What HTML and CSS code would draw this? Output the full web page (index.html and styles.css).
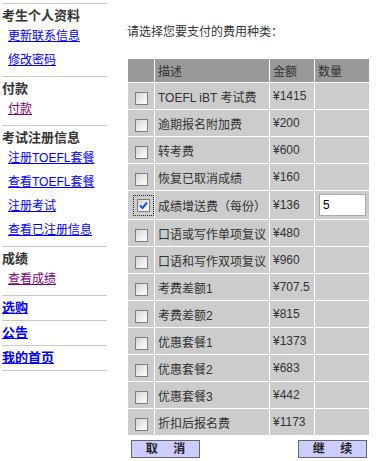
FILE: index.html
```html
<!DOCTYPE html>
<html lang="zh-CN">
<head>
<meta charset="utf-8">
<title>付款</title>
<link rel="stylesheet" href="styles.css">
</head>
<body>
<div class="page">
  <nav class="side">
    <div class="sec">
      <div class="sec-title">考生个人资料</div>
      <a class="link" href="#">更新联系信息</a>
      <a class="link" href="#">修改密码</a>
    </div>
    <div class="sec">
      <div class="sec-title">付款</div>
      <a class="link visited" href="#">付款</a>
    </div>
    <div class="sec">
      <div class="sec-title">考试注册信息</div>
      <a class="link" href="#">注册TOEFL套餐</a>
      <a class="link" href="#">查看TOEFL套餐</a>
      <a class="link" href="#">注册考试</a>
      <a class="link" href="#">查看已注册信息</a>
    </div>
    <div class="sec">
      <div class="sec-title">成绩</div>
      <a class="link visited" href="#">查看成绩</a>
    </div>
    <div class="sec sec-link"><a class="big-link" href="#">选购</a></div>
    <div class="sec sec-link"><a class="big-link" href="#">公告</a></div>
    <div class="sec sec-link"><a class="big-link" href="#">我的首页</a></div>
    <div class="sec sec-end"></div>
  </nav>
  <main class="main">
    <p class="prompt">请选择您要支付的费用种类：</p>
    <table class="fees">
      <colgroup>
        <col class="c1"><col class="c2"><col class="c3"><col class="c4">
      </colgroup>
      <tr class="head"><th></th><th>描述</th><th>金额</th><th>数量</th></tr>
      <tr><td class="cb"><span class="box"></span></td><td>TOEFL iBT 考试费</td><td>¥1415</td><td></td></tr>
      <tr><td class="cb"><span class="box"></span></td><td>逾期报名附加费</td><td>¥200</td><td></td></tr>
      <tr><td class="cb"><span class="box"></span></td><td>转考费</td><td>¥600</td><td></td></tr>
      <tr><td class="cb"><span class="box"></span></td><td>恢复已取消成绩</td><td>¥160</td><td></td></tr>
      <tr class="tall"><td class="cb"><span class="box checked"><svg width="11" height="11" viewBox="0 0 11 11"><path d="M2 5.5 L4.5 8 L9 2.5" stroke="#2150d8" stroke-width="2" fill="none"/></svg></span></td><td>成绩增送费（每份）</td><td>¥136</td><td class="qty"><span class="input">5</span></td></tr>
      <tr><td class="cb"><span class="box"></span></td><td>口语或写作单项复议</td><td>¥480</td><td></td></tr>
      <tr><td class="cb"><span class="box"></span></td><td>口语和写作双项复议</td><td>¥960</td><td></td></tr>
      <tr><td class="cb"><span class="box"></span></td><td>考费差额1</td><td>¥707.5</td><td></td></tr>
      <tr><td class="cb"><span class="box"></span></td><td>考费差额2</td><td>¥815</td><td></td></tr>
      <tr><td class="cb"><span class="box"></span></td><td>优惠套餐1</td><td>¥1373</td><td></td></tr>
      <tr><td class="cb"><span class="box"></span></td><td>优惠套餐2</td><td>¥683</td><td></td></tr>
      <tr><td class="cb"><span class="box"></span></td><td>优惠套餐3</td><td>¥442</td><td></td></tr>
      <tr><td class="cb"><span class="box"></span></td><td>折扣后报名费</td><td>¥1173</td><td></td></tr>
    </table>
    <div class="actions">
      <button class="btn" type="button">取 消</button>
      <button class="btn" type="button">继 续</button>
    </div>
  </main>
</div>
</body>
</html>
```
FILE: styles.css
```css
html, body {
  margin: 0;
  padding: 0;
  background: #fff;
}
body {
  font-family: "Liberation Sans", "Noto Sans CJK SC", sans-serif;
  font-size: 12px;
  color: #333;
}
.page {
  display: flex;
  align-items: flex-start;
}
.side {
  width: 105px;
  margin-left: 2px;
  padding-top: 3px;
  display: flex;
  flex-direction: column;
}
.sec {
  border-top: 1px solid #c8c8c8;
  padding: 3px 0 4px;
  display: flex;
  flex-direction: column;
}
.sec-title {
  font-size: 13px;
  font-weight: bold;
  line-height: 17px;
  height: 17px;
  color: #333;
}
.link {
  font-size: 12px;
  line-height: 24px;
  height: 24px;
  color: #0000ff;
  text-decoration: underline;
  margin-left: 6px;
  align-self: flex-start;
}
.link.visited {
  color: #800080;
}
.sec-link {
  padding: 0;
}
.big-link {
  font-size: 13px;
  font-weight: bold;
  line-height: 24px;
  height: 24px;
  color: #0000ff;
  text-decoration: underline;
  align-self: flex-start;
}
.sec-end {
  padding: 0;
}
.main {
  margin-left: 20px;
  width: 243px;
}
.prompt {
  margin: 24px 0 18px;
  line-height: 16px;
  font-size: 12px;
  color: #333;
}
.fees {
  border-collapse: separate;
  border-spacing: 1px;
  table-layout: fixed;
  width: 243px;
  background: #fff;
}
.c1 { width: 26px; }
.c2 { width: 114px; }
.c3 { width: 44px; }
.c4 { width: 54px; }
.fees th,
.fees td {
  padding: 0 0 0 3px;
  text-align: left;
  font-weight: normal;
  white-space: nowrap;
  overflow: hidden;
  color: #333;
}
.fees th {
  background: #999;
  height: 23px;
  font-size: 12px;
}
.fees td {
  background: #ccc;
  height: 26px;
  vertical-align: middle;
}
.fees tr.tall td {
  height: 28px;
}
.fees td.cb {
  padding: 0;
  vertical-align: top;
}
.box {
  display: block;
  box-sizing: border-box;
  width: 13px;
  height: 13px;
  margin: 9px 0 0 7px;
  border: 1px solid #7d7d7d;
  background: linear-gradient(135deg, #d4d4d4 0%, #f4f4f4 70%, #fff 100%);
}
.box.checked {
  margin-top: 8px;
  margin-left: 9px;
  outline: 1px dotted #222;
  outline-offset: 3px;
}
.box svg {
  display: block;
}
.fees td.qty {
  padding-left: 4px;
}
.input {
  display: block;
  box-sizing: border-box;
  width: 47px;
  height: 22px;
  border: 1px solid #a9a9a9;
  background: #fff;
  color: #000;
  padding: 3px 0 0 3px;
  line-height: 15px;
  font-size: 12px;
}
.actions {
  display: flex;
  justify-content: space-between;
  padding: 0 3px 0 4px;
  margin-top: 4px;
}
.btn {
  box-sizing: border-box;
  width: 69px;
  height: 18px;
  margin: 0;
  padding: 0;
  border: 1px solid #666;
  background: #ccccff;
  font-family: "Liberation Sans", "Noto Sans CJK SC", sans-serif;
  font-size: 12px;
  font-weight: bold;
  line-height: 16px;
  color: #222;
  word-spacing: 12px;
}
```
